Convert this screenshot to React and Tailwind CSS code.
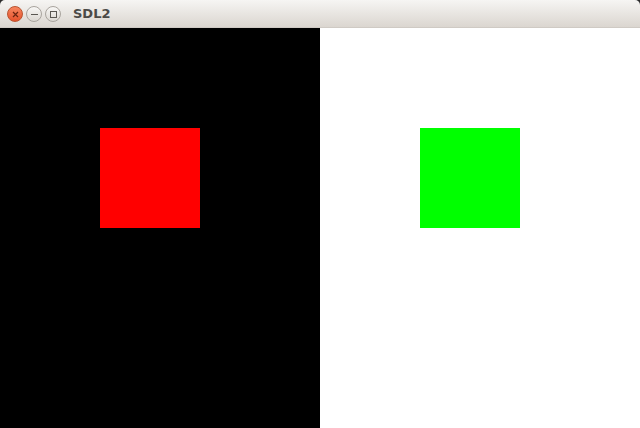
export default function App() {
  return (
    <div className="w-[640px] h-[428px] bg-[#2b2b2b] flex flex-col overflow-hidden">
      <div className="h-[28px] rounded-t-[5px] bg-gradient-to-b from-[#f6f5f3] to-[#dbd6d0] flex items-center pl-[7px] pt-px border-b border-[#cfcac4]">
        <div className="flex items-center gap-[3px]">
          <div className="w-[16px] h-[16px] rounded-full bg-gradient-to-b from-[#f7865f] to-[#e5502a] border border-[#b9532f] flex items-center justify-center">
            <svg width="7" height="7" viewBox="0 0 7 7">
              <path d="M1 1L6 6M6 1L1 6" stroke="#6b2410" strokeWidth="1.2" />
            </svg>
          </div>
          <div className="w-[16px] h-[16px] rounded-full bg-gradient-to-b from-[#f8f7f5] to-[#dcd8d2] border border-[#a9a49e] flex items-center justify-center">
            <div className="w-[7px] h-px bg-[#5a5752]" />
          </div>
          <div className="w-[16px] h-[16px] rounded-full bg-gradient-to-b from-[#f8f7f5] to-[#dcd8d2] border border-[#a9a49e] flex items-center justify-center">
            <div className="w-[7px] h-[7px] border border-[#5a5752]" />
          </div>
        </div>
        <span className="ml-[12px] text-[13px] font-bold text-[#4c4a47] font-['DejaVu_Sans',sans-serif]">SDL2</span>
      </div>
      <div className="flex flex-1">
        <div className="w-[320px] bg-black pt-[100px] pl-[100px]">
          <div className="w-[100px] h-[100px] bg-[#ff0000]" />
        </div>
        <div className="w-[320px] bg-white pt-[100px] pl-[100px]">
          <div className="w-[100px] h-[100px] bg-[#00ff00]" />
        </div>
      </div>
    </div>
  );
}
